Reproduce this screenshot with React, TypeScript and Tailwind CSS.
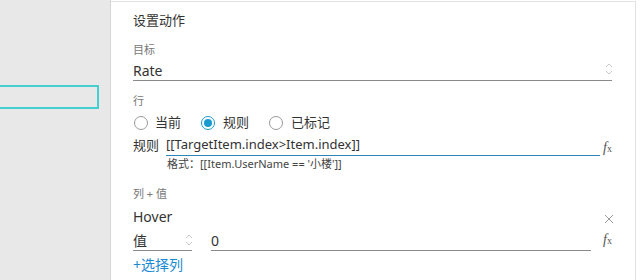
import React from "react";

const Fx = () => (
  <span className="text-[14px] italic text-[#555] leading-none" style={{ fontFamily: '"Liberation Serif", serif' }}>
    f<span className="text-[10px] not-italic">x</span>
  </span>
);

const Spinner = () => (
  <svg width="8" height="14" viewBox="0 0 8 14" fill="none" stroke="#c8c8c8" strokeWidth="1">
    <path d="M1 5 L4 2 L7 5" />
    <path d="M1 9 L4 12 L7 9" />
  </svg>
);

const Radio = ({ on }: { on?: boolean }) => (
  <span
    className={
      "w-[14px] h-[14px] rounded-full border flex items-center justify-center " +
      (on ? "border-[#1a9bd0]" : "border-[#9a9a9a]")
    }
  >
    {on && <span className="w-[8px] h-[8px] rounded-full bg-[#1a9bd0]" />}
  </span>
);

export default function App() {
  return (
    <div
      className="w-[640px] h-[280px] flex bg-white text-[#333] overflow-hidden"
      style={{ fontFamily: '"Noto Sans", "Noto Sans CJK SC", sans-serif' }}
    >
      <div className="w-[111px] h-full bg-[#e8e8e8] border-r border-[#d6d6d6] pt-[85px]">
        <div className="w-[101px] h-[24px] border-2 border-[#45cfcf] -ml-[2px]" />
      </div>
      <div className="w-[525px] h-full mt-[1px] border-t border-r border-[#e2e2e2] pl-[22px] pr-[23px]">
        <div className="h-[38px] flex items-center text-[13px]">设置动作</div>
        <div className="h-[20px] flex items-center text-[11px] text-[#777]">目标</div>
        <div className="h-[21px] flex items-center justify-between border-b border-[#8a8a8a] text-[14px]">
          <span>Rate</span>
          <span className="mr-[-1px] mb-[2px]"><Spinner /></span>
        </div>
        <div className="mt-[10px] h-[20px] flex items-center text-[11px] text-[#777]">行</div>
        <div className="h-[24px] flex items-center text-[13px]">
          <span className="ml-[1px]"><Radio /></span>
          <span className="ml-[7px]">当前</span>
          <span className="ml-[20px]"><Radio on /></span>
          <span className="ml-[8px]">规则</span>
          <span className="ml-[20px]"><Radio /></span>
          <span className="ml-[8px]">已标记</span>
        </div>
        <div className="h-[21px] flex items-center">
          <span className="text-[13px] w-[33px]">规则</span>
          <div className="w-[435px] h-[21px] flex items-center border-b border-[#2a86b8] text-[13px]">
            [[TargetItem.index&gt;Item.index]]
          </div>
          <span className="ml-[3px]"><Fx /></span>
        </div>
        <div className="h-[17px] flex items-center pl-[34px] text-[11px] text-[#444]">
          格式：[[Item.UserName == '小楼']]
        </div>
        <div className="mt-[11px] h-[20px] flex items-center text-[11px] text-[#777]">列 + 值</div>
        <div className="h-[24px] flex items-center justify-between text-[14px]">
          <span>Hover</span>
          <svg width="10" height="10" viewBox="0 0 10 10" stroke="#9a9a9a" strokeWidth="1" className="mr-[-2px] mt-[6px]">
            <path d="M1 1 L9 9 M9 1 L1 9" />
          </svg>
        </div>
        <div className="mt-[2px] h-[21px] flex items-end">
          <div className="w-[59px] h-[21px] flex items-center justify-between border-b border-[#8a8a8a] text-[14px]">
            <span>值</span>
            <span className="mr-[-1px]"><Spinner /></span>
          </div>
          <div className="ml-[19px] w-[381px] h-[21px] flex items-center border-b border-[#8a8a8a] text-[14px]">0</div>
          <span className="ml-[12px] mb-[1px]"><Fx /></span>
        </div>
        <div className="h-[26px] flex items-center text-[14px] text-[#1a8ad4]">+选择列</div>
      </div>
    </div>
  );
}
